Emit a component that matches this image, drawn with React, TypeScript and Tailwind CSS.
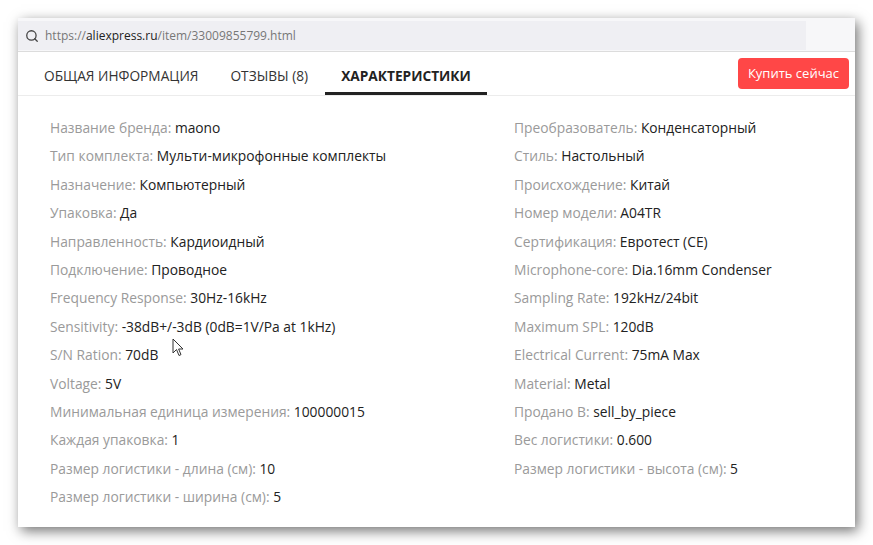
import { Search } from 'lucide-react';

const left: [string, string][] = [
  ['Название бренда', 'maono'],
  ['Тип комплекта', 'Мульти-микрофонные комплекты'],
  ['Назначение', 'Компьютерный'],
  ['Упаковка', 'Да'],
  ['Направленность', 'Кардиоидный'],
  ['Подключение', 'Проводное'],
  ['Frequency Response', '30Hz-16kHz'],
  ['Sensitivity', '-38dB+/-3dB (0dB=1V/Pa at 1kHz)'],
  ['S/N Ration', '70dB'],
  ['Voltage', '5V'],
  ['Минимальная единица измерения', '100000015'],
  ['Каждая упаковка', '1'],
  ['Размер логистики - длина (см)', '10'],
  ['Размер логистики - ширина (см)', '5'],
];

const right: [string, string][] = [
  ['Преобразователь', 'Конденсаторный'],
  ['Стиль', 'Настольный'],
  ['Происхождение', 'Китай'],
  ['Номер модели', 'A04TR'],
  ['Сертификация', 'Евротест (CE)'],
  ['Microphone-core', 'Dia.16mm Condenser'],
  ['Sampling Rate', '192kHz/24bit'],
  ['Maximum SPL', '120dB'],
  ['Electrical Current', '75mA Max'],
  ['Material', 'Metal'],
  ['Продано В', 'sell_by_piece'],
  ['Вес логистики', '0.600'],
  ['Размер логистики - высота (см)', '5'],
];

function PropList({ items }: { items: [string, string][] }) {
  return (
    <ul className="flex flex-col">
      {items.map(([k, v]) => (
        <li key={k} className="h-[28.4px] leading-[28.4px] whitespace-nowrap">
          <span className="text-[#9a9a9a]">{k}: </span>
          <span className="text-[#222]">{v}</span>
        </li>
      ))}
    </ul>
  );
}

export default function App() {
  return (
    <div className="w-[873px] h-[545px] bg-white pt-[18px] pl-[18px] font-['Open_Sans',sans-serif]">
      <div className="relative w-[837px] h-[509px] bg-white shadow-[3px_4px_12px_rgba(0,0,0,0.55)] flex flex-col">
        {/* address bar */}
        <div className="h-[34px] bg-[#f7f7f9] border-b border-[#dcdcdc] pt-[3px]">
          <div className="h-[29px] w-[788px] bg-[#efeff3] flex items-center pl-[7px] text-[12px]">
            <Search size={14} strokeWidth={2.2} className="text-[#444]" />
            <span className="ml-[6px] text-[#777]">https://</span>
            <span className="text-[#222]">aliexpress.ru</span>
            <span className="text-[#777]">/item/33009855799.html</span>
          </div>
        </div>

        {/* tabs */}
        <div className="h-[44px] border-b border-[#ececec] flex items-stretch pl-[26px] pr-[6px] text-[13.7px]">
          <div className="flex items-center pt-[5px] text-[#333]">ОБЩАЯ ИНФОРМАЦИЯ</div>
          <div className="flex items-center pt-[5px] ml-[32px] text-[#333]">ОТЗЫВЫ (8)</div>
          <div className="relative flex items-center pt-[5px] ml-[17px] px-[16px] font-bold text-[#222]">
            ХАРАКТЕРИСТИКИ
            <div className="absolute left-0 right-0 bottom-0 h-[3px] bg-[#222]" />
          </div>
          <div className="ml-auto flex items-center">
            <button className="h-[31px] px-[10px] rounded-[4px] bg-[#ff4747] text-white text-[13px]">
              Купить сейчас
            </button>
          </div>
        </div>

        {/* properties */}
        <div className="flex pt-[18px] text-[13.8px]">
          <div className="pl-[32px] w-[496px]">
            <PropList items={left} />
          </div>
          <div>
            <PropList items={right} />
          </div>
        </div>

        {/* mouse pointer */}
        <svg className="absolute left-[154px] top-[320px]" width="12" height="19" viewBox="0 0 12 19">
          <path d="M1 1 L1 15 L4.5 11.5 L7 17.5 L9 16.6 L6.6 11 L11 11 Z" fill="white" stroke="#333" strokeWidth="1" strokeLinejoin="round" />
        </svg>
      </div>
    </div>
  );
}
